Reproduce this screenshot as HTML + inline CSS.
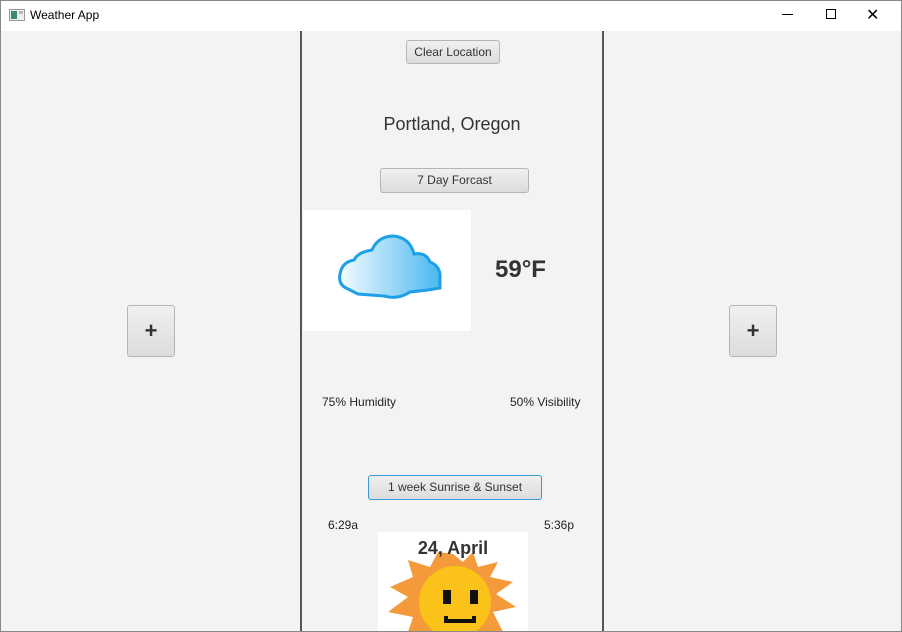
<!DOCTYPE html>
<html><head><style>
*{margin:0;padding:0;box-sizing:border-box}
body{width:902px;height:632px;background:#f3f3f3;font-family:"Liberation Sans",sans-serif;position:relative;overflow:hidden;}
.t{position:absolute;left:0;top:0;width:902px;height:31px;background:#fff}
.abs{position:absolute}
.btn{position:absolute;border:1px solid #b5b5b5;border-radius:3px;background:linear-gradient(#f0f0f0,#dcdcdc);font-size:12px;color:#333;text-align:center}
.lbl{position:absolute;font-size:12px;color:#222}
</style></head><body>
<div class="t">
 <svg class="abs" style="left:9px;top:9px" width="16" height="12"><rect x="0.5" y="0.5" width="15" height="11" fill="#eee" stroke="#999"/><rect x="2" y="2" width="6" height="8" fill="#3a8a7a"/><rect x="10" y="2" width="4" height="3" fill="#bbb"/></svg>
 <div class="abs" style="left:30px;top:8px;font-size:12px;color:#000">Weather App</div>
 <div class="abs" style="left:782px;top:14px;width:11px;height:1px;background:#000"></div>
 <div class="abs" style="left:826px;top:9px;width:10px;height:10px;border:1px solid #000"></div>
 <div class="abs" style="left:866px;top:5px;font-size:16px;color:#000">✕</div>
</div>
<div class="abs" style="left:0;top:0;width:902px;height:632px;border:1px solid #888;pointer-events:none;z-index:5"></div>
<div class="abs" style="left:300px;top:31px;width:2px;height:601px;background:#555"></div>
<div class="abs" style="left:602px;top:31px;width:2px;height:601px;background:#555"></div>
<div class="btn" style="left:127px;top:305px;width:48px;height:52px;font-size:22px;font-weight:bold;line-height:50px">+</div>
<div class="btn" style="left:729px;top:305px;width:48px;height:52px;font-size:22px;font-weight:bold;line-height:50px">+</div>
<div class="btn" style="left:406px;top:40px;width:94px;height:24px;line-height:22px">Clear Location</div>
<div class="abs" style="left:302px;top:114px;width:300px;text-align:center;font-size:18px;color:#333">Portland, Oregon</div>
<div class="btn" style="left:380px;top:168px;width:149px;height:25px;line-height:23px">7 Day Forcast</div>
<div class="abs" style="left:303px;top:210px;width:168px;height:121px;background:#fff"></div>
<svg class="abs" style="left:338px;top:232px" width="104" height="70">
 <defs><linearGradient id="g" x1="0" x2="1"><stop offset="0" stop-color="#f4fbff"/><stop offset="1" stop-color="#4ab8f0"/></linearGradient></defs>
 <path d="M8 56 Q0 52 2 42 Q4 30 16 28 Q20 20 34 18 Q40 4 56 4 Q72 6 76 22 Q88 20 92 30 Q102 34 102 44 L102 56 L90 58 L72 60 Q60 68 46 64 L20 62 Z" fill="url(#g)" stroke="#1ea0e8" stroke-width="3"/>
</svg>
<div class="abs" style="left:495px;top:256px;font-size:24px;font-weight:bold;color:#333">59°F</div>
<div class="lbl" style="left:322px;top:395px">75% Humidity</div>
<div class="lbl" style="left:510px;top:395px">50% Visibility</div>
<div class="btn" style="left:368px;top:475px;width:174px;height:25px;line-height:23px;border-color:#3c9ad8">1 week Sunrise &amp; Sunset</div>
<div class="lbl" style="left:328px;top:518px">6:29a</div>
<div class="lbl" style="left:544px;top:518px">5:36p</div>
<div class="abs" style="left:378px;top:532px;width:150px;height:100px;background:#fff;overflow:hidden">
 <svg width="150" height="100">
  <polygon points="75,22 85,30 95,20 100,35 120,30 112,45 135,50 118,62 138,75 115,80 125,100 30,100 35,85 10,80 30,65 12,55 35,45 30,28 52,35 60,20" fill="#f59a3a"/>
  <circle cx="77" cy="70" r="36" fill="#fbc21a"/>
  <rect x="65" y="58" width="8" height="14" fill="#111"/><rect x="92" y="58" width="8" height="14" fill="#111"/>
  <path d="M68 84 v5 h28 v-5" fill="none" stroke="#111" stroke-width="4"/>
 </svg>
 <div class="abs" style="left:0;top:6px;width:150px;text-align:center;font-size:18px;font-weight:bold;color:#333">24, April</div>
</div>
</body></html>
